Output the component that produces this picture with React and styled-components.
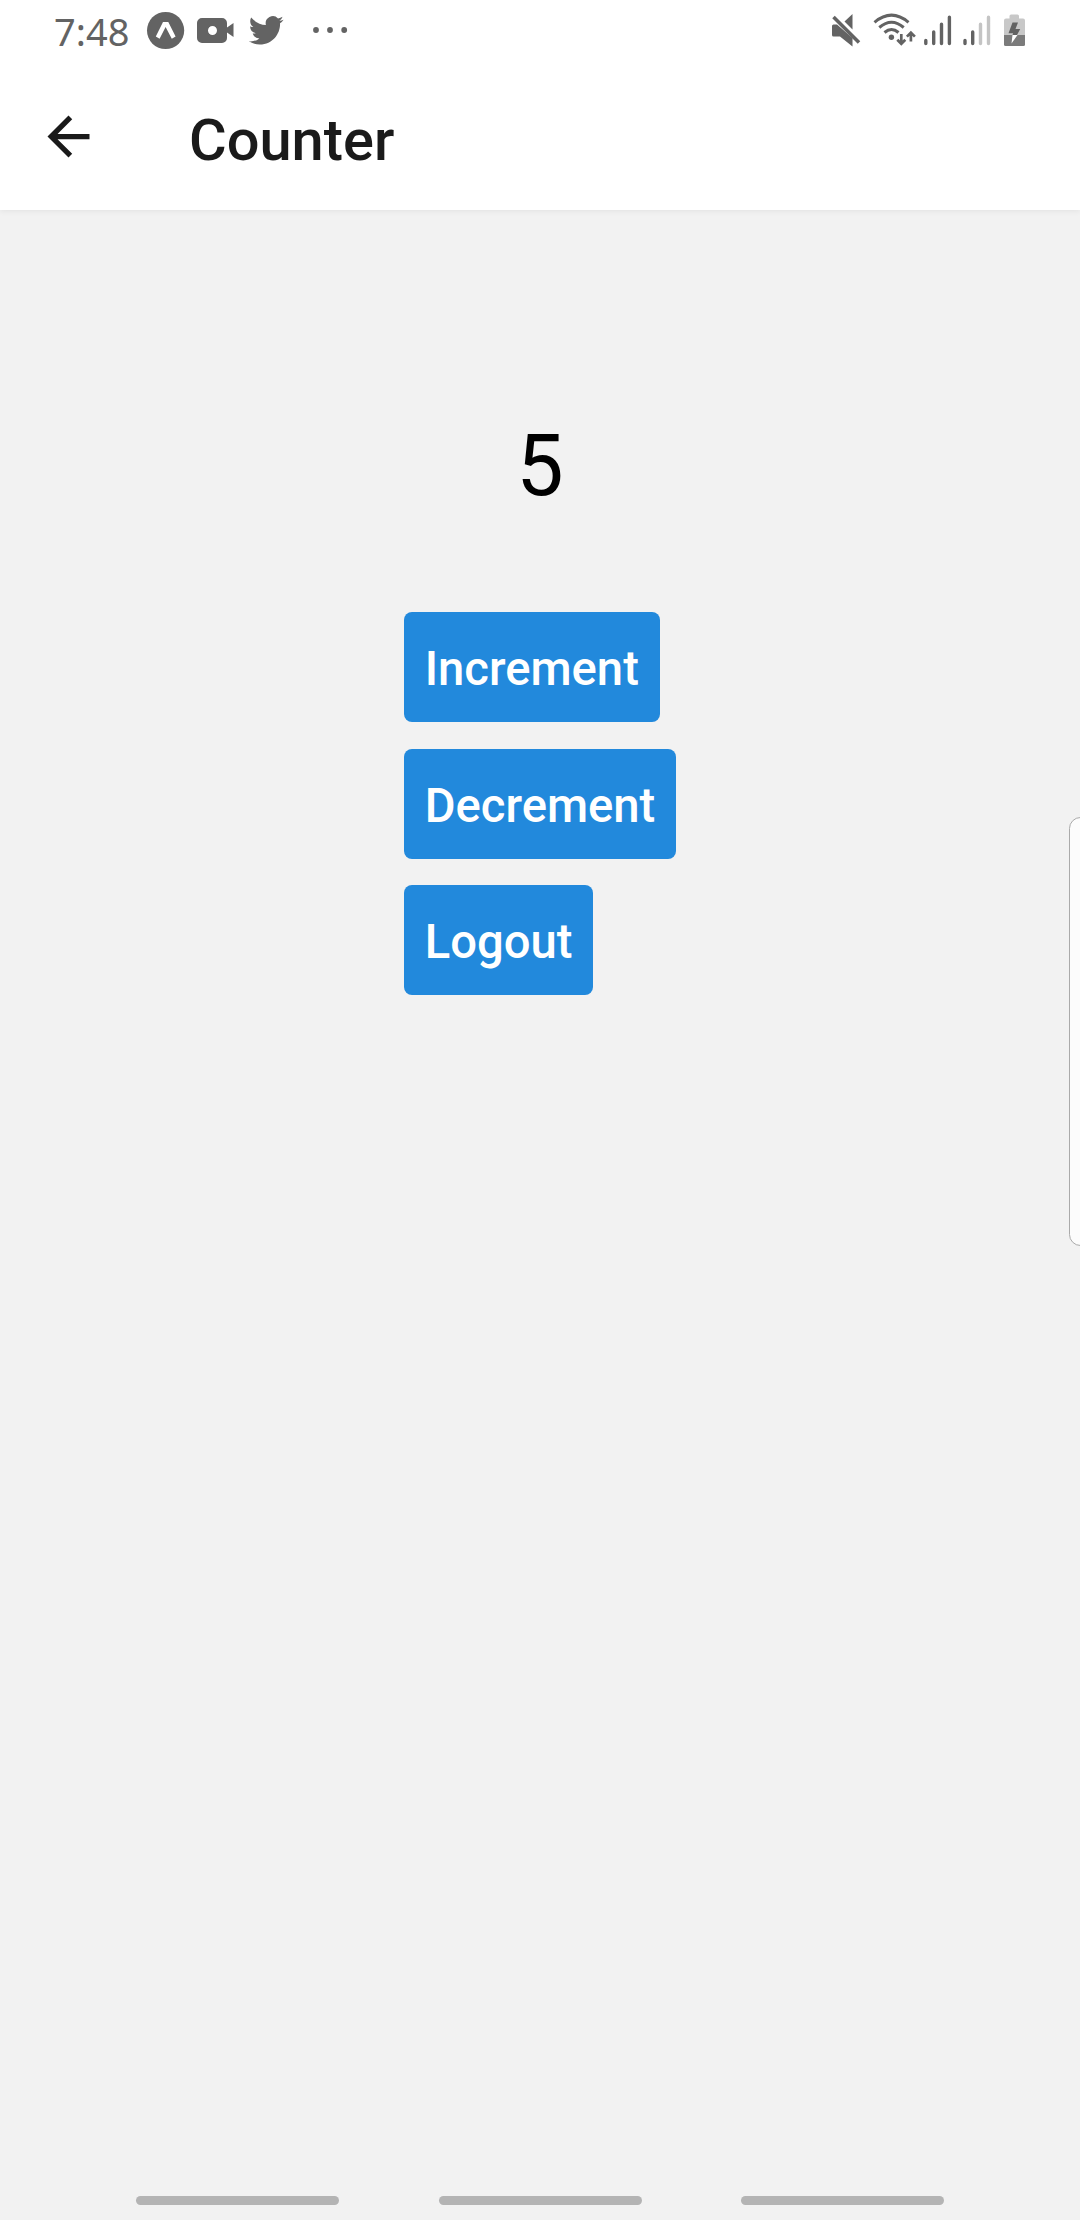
import React, { useState } from "react";
import styled, { createGlobalStyle } from "styled-components";

const GlobalStyle = createGlobalStyle`
  * { box-sizing: border-box; }
  body { margin: 0; background: #f2f2f2; font-family: Roboto, "Liberation Sans", sans-serif; }
`;

const Screen = styled.div`
  position: relative;
  width: 1080px;
  height: 2220px;
  display: flex;
  flex-direction: column;
  background: #f2f2f2;
  overflow: hidden;
`;

const Header = styled.header`
  height: 210px;
  background: #fff;
  box-shadow: 0 1px 6px rgba(0, 0, 0, 0.07);
`;

const StatusBar = styled.div`
  height: 63px;
  display: flex;
  justify-content: space-between;
  padding: 0 50px 0 54px;
  color: #636363;
`;

const StatusGroup = styled.div`
  display: flex;
  height: 63px;
`;

const Clock = styled.span`
  width: 86px;
  font: 400 38px/63px "Noto Sans", "Open Sans", sans-serif;
  white-space: nowrap;
`;

const Toolbar = styled.div`
  height: 147px;
  display: flex;
  align-items: center;
  padding: 0 37px;
`;

const BackButton = styled.button`
  display: flex;
  border: 0;
  padding: 0;
  background: none;
  color: #1a1a1a;
`;

const Title = styled.h1`
  margin: 6px 0 0 89px;
  font-size: 57.75px;
  font-weight: 500;
  line-height: 66px;
  color: #1a1a1a;
`;

const Main = styled.main`
  flex: 1;
  display: flex;
  flex-direction: column;
  align-items: center;
  padding-top: 207px;
`;

const Count = styled.div`
  font-size: 84.4px;
  line-height: 100px;
  color: #000;
`;

const Actions = styled.div`
  display: flex;
  flex-direction: column;
  align-items: flex-start;
  gap: 26.5px;
  margin-top: 95px;
`;

const ActionButton = styled.button`
  height: 110px;
  border: 0;
  border-radius: 8px;
  padding: 4px 20.8px 0;
  background: #2289dc;
  color: #fff;
  font: 500 47.2px/56px Roboto, "Liberation Sans", sans-serif;
`;

const EdgePanel = styled.div`
  position: absolute;
  right: -12px;
  top: 817px;
  width: 23px;
  height: 429px;
  border: 1.5px solid #aaa;
  border-radius: 14px;
  background: #fcfcfc;
`;

const NavigationBar = styled.nav`
  height: 24px;
  display: flex;
  gap: 99.5px;
  padding-left: 136px;
`;

const NavHandle = styled.span`
  width: 203px;
  height: 9px;
  border-radius: 5px;
  background: #b4b4b4;
`;

const NotificationIcons = () => (
  <svg width="220" height="63" viewBox="140 0 220 63" fill="currentColor" aria-hidden="true">
    <circle cx="165.6" cy="30.5" r="18.6" />
    <path d="M163 22h5.3l7.3 14.5-3.8 2.3L165.6 27l-6 11.8-3.8-2.3z" fill="#fff" />
    <path
      fillRule="evenodd"
      d="M202 18h20a5 5 0 0 1 5 5v4.5l6.5-4.5v14l-6.5-4.5V38a5 5 0 0 1-5 5h-20a5 5 0 0 1-5-5V23a5 5 0 0 1 5-5Zm10.5 8a4.5 4.5 0 1 0 0 9 4.5 4.5 0 0 0 0-9Z"
    />
    <path
      transform="translate(248.8 13) scale(1.45)"
      d="M23.954 4.569a10 10 0 0 1-2.825.775 4.958 4.958 0 0 0 2.163-2.723c-.951.555-2.005.959-3.127 1.184a4.92 4.92 0 0 0-8.384 4.482C7.691 8.094 4.066 6.13 1.64 3.161a4.822 4.822 0 0 0-.666 2.475c0 1.71.87 3.213 2.188 4.096a4.904 4.904 0 0 1-2.228-.616v.061a4.923 4.923 0 0 0 3.946 4.827 4.996 4.996 0 0 1-2.212.085 4.937 4.937 0 0 0 4.604 3.417 9.868 9.868 0 0 1-6.102 2.105c-.39 0-.779-.023-1.17-.067a13.995 13.995 0 0 0 7.557 2.209c9.054 0 13.999-7.496 13.999-13.986 0-.209 0-.42-.015-.63a9.936 9.936 0 0 0 2.46-2.548z"
    />
    <circle cx="316" cy="30" r="2.9" />
    <circle cx="330" cy="30" r="2.9" />
    <circle cx="344.2" cy="30" r="2.9" />
  </svg>
);

const SystemIcons = () => (
  <svg width="210" height="63" viewBox="820 0 210 63" fill="currentColor" aria-hidden="true">
    <path d="M852.500 14v15.500l-8-8z" />
    <path d="M832 26q0-1.500 1.500-1.500h3.500L852.500 38v8.500L840 36.500h-6.500q-1.500 0-1.500-1.500z" />
    <path d="m833.500 17 25.500 25.500" stroke="currentColor" strokeWidth="3.600" />
    <g fill="none" stroke="currentColor" strokeWidth="3">
      <path d="M874.500 22.300Q891.500 8 908.500 22.300M879.300 27.500Q891.500 17 903.700 27.500M884.500 32.500Q891.500 26.500 898.500 32.500" />
      <path strokeWidth="2.700" d="M901.300 34v9M897.300 39.800l4 4 4-4M910.900 41.500V32.500M906.900 36.600l4-4 4 4" />
    </g>
    <circle cx="891.400" cy="37.300" r="2.700" />
    <g fill="none" stroke="currentColor" strokeWidth="3.400" strokeLinecap="round">
      <path d="M925.800 40.500V43.500M933.700 32v11.500M941.500 24.200v19.300M949.400 17.200v26.300M965 40.500V43.500M972.700 32v11.500" />
      <path stroke="#c4c4c4" d="M980.500 24.200v19.300M988.500 17.200v26.300" />
    </g>
    <path fill="#c8c8c8" d="M1011 14.500h6.500q1.500 0 1.500 1.500v2.500h4q2 0 2 2V35h-21V20.500q0-2 2-2h3.500V16q0-1.500 1.500-1.500z" />
    <path fill="#7b7b7b" d="M1004 35h21v9.500q0 1.500-1.500 1.500h-18q-1.500 0-1.500-1.500z" />
    <path fill="#636363" d="M1012.500 22.500h5.500l-2.500 6.500h4.700L1017 35h-4.500l.6-1.800h-4.600z" />
    <path fill="#fff" d="M1012.500 35h5l-6 8.500z" />
  </svg>
);

const BackIcon = () => (
  <svg width="63" height="63" viewBox="0 0 24 24" fill="currentColor" aria-hidden="true">
    <path d="M20 11H7.830l5.590-5.590L12 4l-8 8 8 8 1.410-1.410L7.830 13H20v-2z" />
  </svg>
);

export default function App() {
  const [count, setCount] = useState(5);

  return (
    <>
      <GlobalStyle />
      <Screen>
        <Header>
          <StatusBar>
            <StatusGroup>
              <Clock>7:48</Clock>
              <NotificationIcons />
            </StatusGroup>
            <StatusGroup>
              <SystemIcons />
            </StatusGroup>
          </StatusBar>
          <Toolbar>
            <BackButton aria-label="Back">
              <BackIcon />
            </BackButton>
            <Title>Counter</Title>
          </Toolbar>
        </Header>
        <Main>
          <Count>{count}</Count>
          <Actions>
            <ActionButton onClick={() => setCount(count + 1)}>Increment</ActionButton>
            <ActionButton onClick={() => setCount(count - 1)}>Decrement</ActionButton>
            <ActionButton>Logout</ActionButton>
          </Actions>
        </Main>
        <NavigationBar>
          <NavHandle />
          <NavHandle />
          <NavHandle />
        </NavigationBar>
        <EdgePanel />
      </Screen>
    </>
  );
}
